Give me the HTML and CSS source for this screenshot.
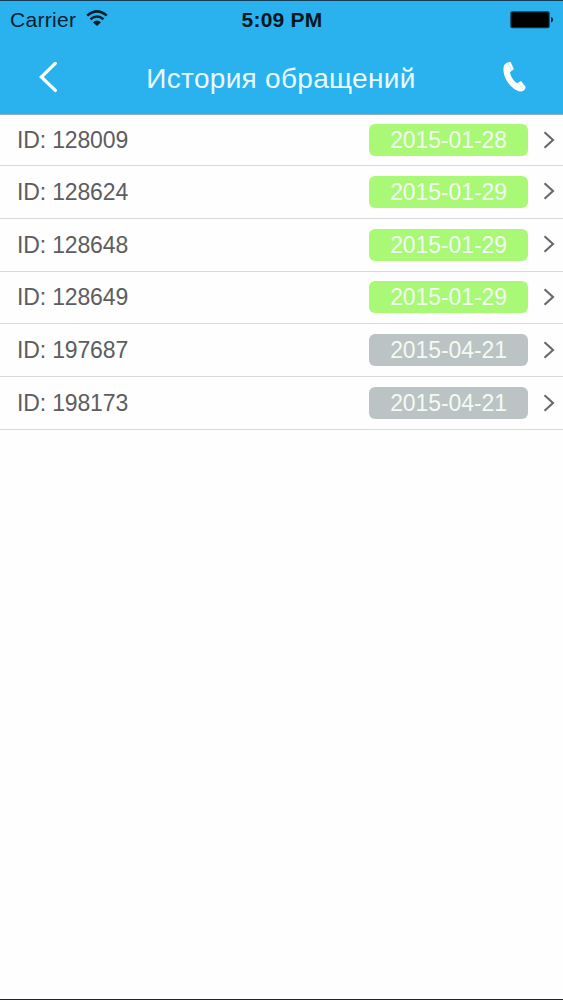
FILE: index.html
```
<!DOCTYPE html>
<html lang="ru">
<head>
  <meta charset="utf-8">
  <title>История обращений</title>
  <link rel="stylesheet" href="styles.css">
</head>

<body>
  <div class="header">
    <div class="status">
      <div class="status-left">
        <span class="carrier">Carrier</span>
        <svg class="wifi" width="22" height="17" viewBox="0 0 22 17">
          <path d="M1.2 5.6Q11-2.8 20.8 5.6M4.5 9.2Q11 3.8 17.5 9.2" fill="none" stroke="#04202e" stroke-width="2.5"/>
          <path d="M6.9 12.2Q11 8.8 15.1 12.2L11 16Z" fill="#04202e"/>
        </svg>
      </div>
      <span class="time">5:09 PM</span>
      <svg class="battery" width="44" height="18" viewBox="0 0 44 18">
        <rect x="0.3" y="0.3" width="39.4" height="16.9" rx="2" fill="#03374f"/>
        <rect x="1.5" y="1.5" width="37" height="14.5" rx="1" fill="#000"/>
        <path d="M41 6Q43.2 6.5 43.2 8.8T41 11.6Z" fill="#04202e"/>
      </svg>
    </div>
    <div class="nav">
      <svg class="back" width="20" height="32" viewBox="0 0 20 32">
        <path d="M16.3 2.4L2.3 16L16.3 29.4" fill="none" stroke="#fff" stroke-width="3.3" stroke-linecap="round"/>
      </svg>
      <h1>История обращений</h1>
      <svg class="phone" width="24" height="32" viewBox="0 0 24 32">
        <path d="M1.8 3.2C4 1.5 6 .7 7.6 1.1L10.8 7.8C10.8 9 8 10 7 11.2C7.3 15 10.5 19.8 14.1 22.2C15.3 22.3 16.5 20.1 18 20L22.6 25.8C22.5 28.3 20.5 30.5 17.5 30.6C10.5 29.9 1.8 20 .7 11.5C.2 7.5.5 5 1.8 3.2Z" fill="#fff"/>
        <path d="M5.2 2.8L8.7 9.5M15.3 21.8L20.3 28.5" stroke="#b9e4fa" stroke-width=".8"/>
      </svg>
    </div>
  </div>

  <ul class="list">
    <li>
      <span class="number">ID: 128009</span>
      <span class="date open">2015-01-28</span>
      <svg class="arrow" width="12" height="18" viewBox="0 0 12 18"><path d="M1.5 1.3L10 9L1.5 16.7"/></svg>
    </li>
    <li>
      <span class="number">ID: 128624</span>
      <span class="date open">2015-01-29</span>
      <svg class="arrow" width="12" height="18" viewBox="0 0 12 18"><path d="M1.5 1.3L10 9L1.5 16.7"/></svg>
    </li>
    <li>
      <span class="number">ID: 128648</span>
      <span class="date open">2015-01-29</span>
      <svg class="arrow" width="12" height="18" viewBox="0 0 12 18"><path d="M1.5 1.3L10 9L1.5 16.7"/></svg>
    </li>
    <li>
      <span class="number">ID: 128649</span>
      <span class="date open">2015-01-29</span>
      <svg class="arrow" width="12" height="18" viewBox="0 0 12 18"><path d="M1.5 1.3L10 9L1.5 16.7"/></svg>
    </li>
    <li>
      <span class="number">ID: 197687</span>
      <span class="date closed">2015-04-21</span>
      <svg class="arrow" width="12" height="18" viewBox="0 0 12 18"><path d="M1.5 1.3L10 9L1.5 16.7"/></svg>
    </li>
    <li>
      <span class="number">ID: 198173</span>
      <span class="date closed">2015-04-21</span>
      <svg class="arrow" width="12" height="18" viewBox="0 0 12 18"><path d="M1.5 1.3L10 9L1.5 16.7"/></svg>
    </li>
  </ul>
</body>

</html>
```

FILE: styles.css
```
* {
  box-sizing: border-box;
}

body {
  margin: 0;
  height: 1000px;
  overflow: hidden;
  font-family: "Liberation Sans", Arial, sans-serif;
  background-color: #fefefe;
  border-bottom: 1px solid #242326;
}

.header {
  height: 115px;
  background-color: #2ab2ef;
  border-top: 1px solid #123c58;
  border-bottom: 1px solid #8fb0c4;
}

.status {
  display: grid;
  grid-template-columns: 1fr auto 1fr;
  align-items: center;
  height: 37px;
  padding: 0 9px 0 10px;
  color: #04202e;
}

.status-left {
  display: flex;
  align-items: center;
}

.carrier {
  font-size: 21px;
  letter-spacing: 0.3px;
}

.wifi {
  margin: 0 0 2px 10px;
}

.time {
  color: #041620;
  font-size: 21px;
  font-weight: bold;
  letter-spacing: 0.2px;
}

.battery {
  justify-self: end;
}

.nav {
  display: flex;
  align-items: center;
  justify-content: space-between;
  height: 77px;
  padding: 0 36px 0 39px;
}

h1 {
  margin: 4px 0 0;
  color: #e9fbff;
  font-size: 28px;
  font-weight: normal;
  letter-spacing: 0.3px;
}

.list {
  margin: 0;
  padding: 0;
  list-style: none;
}

.list li {
  display: flex;
  align-items: center;
  height: 52.8px;
  padding: 0 8px 0 17px;
  border-bottom: 1px solid #d9d9dc;
}

.list li:first-child {
  height: 51px;
}

.number {
  flex: 1;
  padding-top: 1px;
  color: #5d5d60;
  font-size: 23px;
  letter-spacing: -0.15px;
}

.date {
  width: 159px;
  height: 32px;
  margin-right: 15px;
  border-radius: 6px;
  color: #f2fbf2;
  font-size: 23px;
  line-height: 33px;
  letter-spacing: -0.1px;
  text-align: center;
}

.open {
  background-color: #a9f876;
}

.closed {
  background-color: #bcc3c4;
}

.arrow {
  margin-bottom: 1px;
}

.arrow path {
  fill: none;
  stroke: #68686b;
  stroke-width: 2.1;
}
```
